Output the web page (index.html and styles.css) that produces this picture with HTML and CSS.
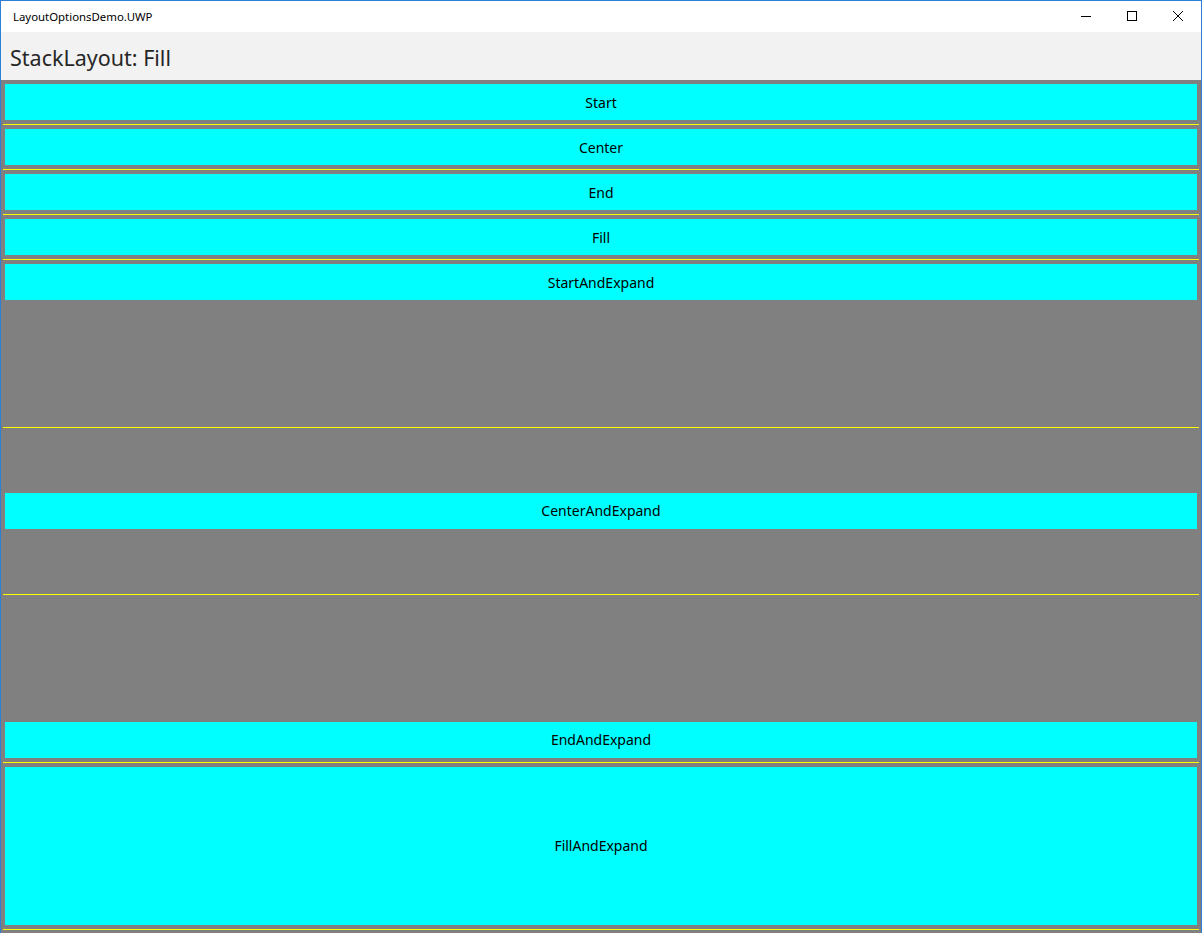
FILE: index.html
```html
<!DOCTYPE html>
<html lang="en">
<head>
<meta charset="utf-8">
<title>LayoutOptionsDemo.UWP</title>
<link rel="stylesheet" href="styles.css">
</head>
<body>
<div class="window">
  <div class="titlebar">
    <span class="title">LayoutOptionsDemo.UWP</span>
    <div class="controls">
      <span class="ctl">
        <svg width="10" height="10" viewBox="0 0 10 10"><path d="M0 5.5H10" stroke="#000" stroke-width="1"/></svg>
      </span>
      <span class="ctl">
        <svg width="10" height="10" viewBox="0 0 10 10"><rect x="0.5" y="0.5" width="9" height="9" fill="none" stroke="#000" stroke-width="1"/></svg>
      </span>
      <span class="ctl">
        <svg width="10" height="10" viewBox="0 0 10 10"><path d="M0 0L10 10M10 0L0 10" stroke="#000" stroke-width="1"/></svg>
      </span>
    </div>
  </div>
  <div class="header">StackLayout: Fill</div>
  <div class="content">
    <div class="item">Start</div>
    <div class="line"></div>
    <div class="item">Center</div>
    <div class="line"></div>
    <div class="item">End</div>
    <div class="line"></div>
    <div class="item">Fill</div>
    <div class="line"></div>
    <div class="slot slot-start"><div class="item">StartAndExpand</div></div>
    <div class="line"></div>
    <div class="slot slot-center"><div class="item">CenterAndExpand</div></div>
    <div class="line"></div>
    <div class="slot slot-end"><div class="item">EndAndExpand</div></div>
    <div class="line"></div>
    <div class="slot slot-fill"><div class="item item-fill">FillAndExpand</div></div>
    <div class="line"></div>
  </div>
</div>
</body>
</html>
```
FILE: styles.css
```css
html, body {
  margin: 0;
  padding: 0;
  height: 100%;
  overflow: hidden;
}
body {
  font-family: "Segoe UI", "Noto Sans", "Open Sans", sans-serif;
  background: #ffffff;
}
.window {
  box-sizing: border-box;
  height: 933px;
  border: 1px solid #2b7fd4;
  border-bottom: 0;
  display: flex;
  flex-direction: column;
}
.titlebar {
  height: 31px;
  flex: none;
  background: #ffffff;
  display: flex;
  align-items: center;
  justify-content: space-between;
}
.title {
  font-size: 11.4px;
  color: #000;
  padding-left: 12px;
  padding-bottom: 1px;
}
.controls {
  display: flex;
  height: 100%;
}
.ctl {
  width: 46px;
  height: 100%;
  display: flex;
  align-items: center;
  justify-content: center;
}
.ctl svg {
  display: block;
  margin-top: -1px;
}
.header {
  height: 48px;
  flex: none;
  background: #f2f2f2;
  display: flex;
  align-items: center;
  padding-left: 9px;
  padding-top: 2px;
  font-size: 21.5px;
  color: #262626;
  box-sizing: border-box;
}
.content {
  flex: 1;
  min-height: 0;
  background: #808080;
  padding: 4px 2px 3px;
  display: flex;
  flex-direction: column;
  gap: 4px;
}
.item {
  flex: none;
  height: 36px;
  margin: 0 2px;
  background: #00ffff;
  color: #000;
  font-size: 14px;
  display: flex;
  align-items: center;
  justify-content: center;
}
.line {
  flex: none;
  height: 1px;
  background: #ffff00;
}
.slot {
  flex: 1;
  min-height: 0;
  display: flex;
  flex-direction: column;
}
.slot-start { justify-content: flex-start; }
.slot-center { justify-content: center; }
.slot-end { justify-content: flex-end; }
.slot-fill { justify-content: stretch; }
.item-fill {
  flex: 1;
  height: auto;
}
```
